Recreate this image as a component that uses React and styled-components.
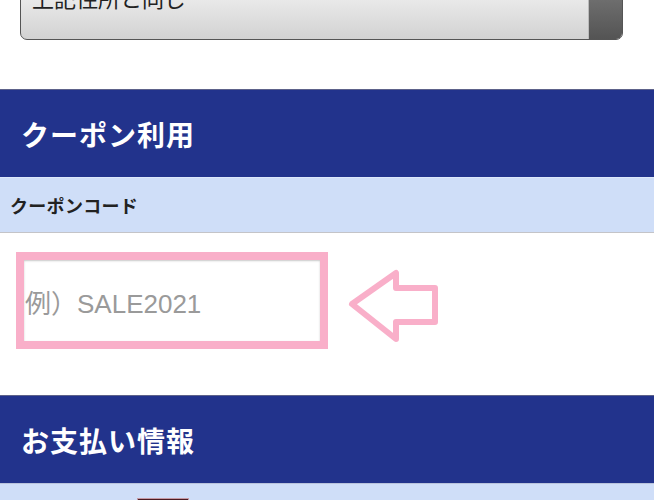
import React from "react";
import styled, { createGlobalStyle } from "styled-components";

const GlobalStyle = createGlobalStyle`
    html, body {
        margin: 0;
        padding: 0;
        background: #fff;
        font-family: "Liberation Sans", "Noto Sans CJK JP", sans-serif;
    }
    * {
        box-sizing: border-box;
    }
`

function App() {
    return (
        <Page>
            <GlobalStyle />

            {/* ADDRESS SELECT (scrolled half out of view) */}
            <SelectWrap>
                <Select>
                    <SelectText>上記住所と同じ</SelectText>
                    <SelectButton />
                </Select>
            </SelectWrap>

            {/* COUPON */}
            <SectionHeader>クーポン利用</SectionHeader>
            <FieldLabel>クーポンコード</FieldLabel>
            <FieldBody>
                <InputFrame>
                    <CouponInput type="text" placeholder="例）SALE2021" />
                </InputFrame>
                <Arrow width="96" height="76" viewBox="0 0 96 76">
                    <polygon
                        points="6,36 50,5 50,20 89,20 89,54 50,54 50,71"
                        fill="none"
                        stroke="#f9afc9"
                        strokeWidth="6"
                        strokeLinejoin="round"
                    />
                </Arrow>
            </FieldBody>

            {/* PAYMENT */}
            <SectionHeader>お支払い情報</SectionHeader>
            <PayRow>
                <CardLogo />
            </PayRow>
        </Page>
    )
}

export default App

const Page = styled.div`
    width: 654px;
    height: 500px;
    overflow: hidden;
`

const SelectWrap = styled.div`
    padding: 0 31px 0 20px;
    margin-top: -20px;
    margin-bottom: 49px;
`

const Select = styled.div`
    display: flex;
    height: 60px;
    border: 1px solid #555;
    border-radius: 7px;
    overflow: hidden;
    background: linear-gradient(#f4f4f4, #d2d2d2);
`

const SelectText = styled.div`
    flex: 1;
    align-self: flex-end;
    padding: 0 0 28px 11px;
    font-size: 22px;
    line-height: 22px;
    color: #222;
`

const SelectButton = styled.div`
    width: 34px;
    border-left: 1px solid #bbb;
    background: linear-gradient(#7a7a7a, #545454);
`

const SectionHeader = styled.h2`
    margin: 0;
    height: 88px;
    display: flex;
    align-items: center;
    padding-left: 21px;
    background-color: #22338c;
    border-top: 1px solid #5d628a;
    color: #fff;
    font-family: "Noto Sans CJK JP", sans-serif;
    font-size: 28px;
    font-weight: 700;
    letter-spacing: 1px;
`

const FieldLabel = styled.div`
    height: 56px;
    display: flex;
    align-items: center;
    padding-left: 10px;
    background-color: #cfdef8;
    border-top: 1px solid #dde8fb;
    border-bottom: 1px solid #c4c4c8;
    color: #222;
    font-family: "Noto Sans CJK JP", sans-serif;
    font-size: 18px;
    font-weight: 700;
    letter-spacing: 0.3px;
`

const FieldBody = styled.div`
    height: 162px;
    display: flex;
    align-items: flex-start;
    padding: 19px 0 0 16px;
`

const InputFrame = styled.div`
    width: 312px;
    height: 97px;
    border: 8px solid #f9afc9;
    background: #fff;
`

const CouponInput = styled.input`
    width: 100%;
    height: 100%;
    border: none;
    outline: none;
    padding: 8px 0 0 1px;
    box-shadow: inset 0 1px 2px rgba(0, 0, 0, 0.22);
    font-family: "Liberation Sans", "Noto Sans CJK JP", sans-serif;
    font-size: 26px;
    color: #333;
    background: #fff;

    &::placeholder {
        color: #9a9a9a;
    }
`

const Arrow = styled.svg`
    display: block;
    margin: 16px 0 0 18px;
`

const PayRow = styled.div`
    height: 60px;
    padding: 14px 0 0 137px;
    background-color: #cfdef8;
    border-top: 1px solid #b9c3dc;
`

const CardLogo = styled.div`
    width: 52px;
    height: 32px;
    background-color: #4b1a22;
    border: 1px solid #c59aa4;
`
